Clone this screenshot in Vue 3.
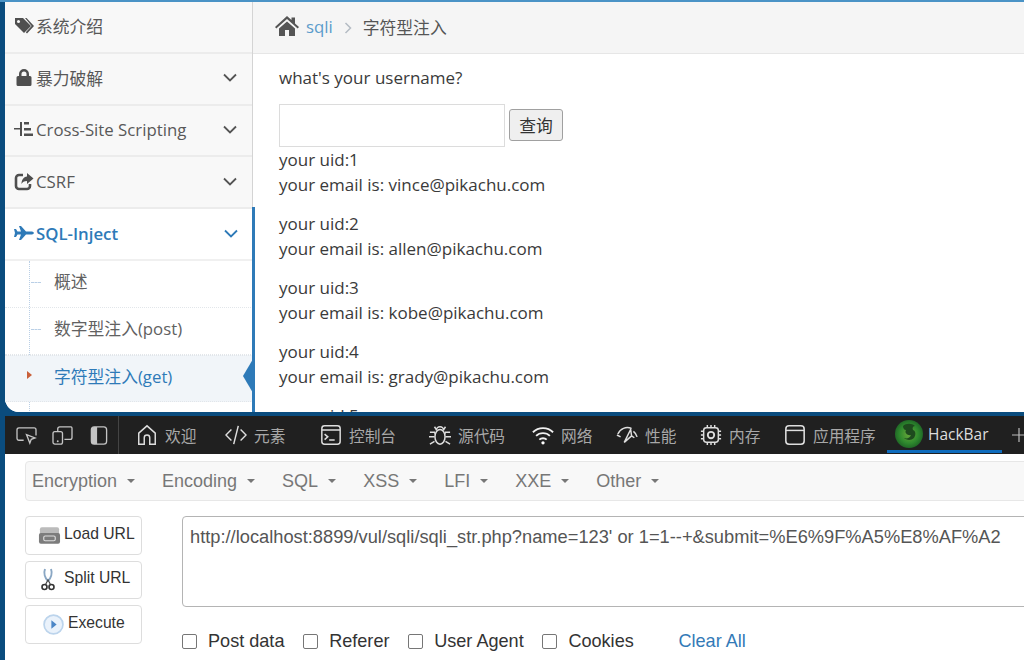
<script setup>
const navs = [
  { id: 'tag', label: '系统介绍', arrow: false },
  { id: 'lock', label: '暴力破解', arrow: true },
  { id: 'xss', label: 'Cross-Site Scripting', arrow: true },
  { id: 'share', label: 'CSRF', arrow: true },
]
const subs = [
  { label: '概述', active: false },
  { label: '数字型注入(post)', active: false },
  { label: '字符型注入(get)', active: true },
]
const results = [
  ['1', 'vince'], ['2', 'allen'], ['3', 'kobe'], ['4', 'grady'],
]
const tabs = [
  { id: 'home', label: '欢迎', w: 89 },
  { id: 'code', label: '元素', w: 95 },
  { id: 'console', label: '控制台', w: 109 },
  { id: 'bug', label: '源代码', w: 103 },
  { id: 'wifi', label: '网络', w: 84 },
  { id: 'perf', label: '性能', w: 84 },
  { id: 'chip', label: '内存', w: 84 },
  { id: 'app', label: '应用程序', w: 103 },
]
const menus = ['Encryption', 'Encoding', 'SQL', 'XSS', 'LFI', 'XXE', 'Other']
const checks = ['Post data', 'Referer', 'User Agent', 'Cookies']
</script>

<template>
  <div class="screen">
    <div class="page">
      <aside class="side">
        <div class="side-top">
          <div v-for="n in navs" :key="n.id" class="nav">
            <svg class="nav-icon" viewBox="0 0 20 20">
              <g v-if="n.id === 'tag'" fill="#4f4f4f">
                <path d="M1 2h8l8 8-7 7-9-9z" />
                <path d="M11 2h1.500l7.500 8-7 7.500-1.200-1.200 5.800-6.300z" />
                <circle cx="4.500" cy="5.500" r="1.500" fill="#f8f8f8" />
              </g>
              <path v-else-if="n.id === 'lock'" fill="#4f4f4f" fill-rule="evenodd" d="M5 8V6a5 5 0 0 1 10 0v2h1a1.500 1.500 0 0 1 1.500 1.500v7A1.500 1.500 0 0 1 16 18H4a1.500 1.500 0 0 1-1.500-1.500v-7A1.500 1.500 0 0 1 4 8zm2.500 0h5V6a2.500 2.500 0 0 0-5 0z" />
              <g v-else-if="n.id === 'xss'" fill="#4f4f4f">
                <rect x="0" y="9" width="6" height="1.500" />
                <rect x="6" y="3" width="2" height="14" />
                <rect x="10" y="3" width="5" height="2.500" />
                <rect x="10" y="9" width="7" height="2.500" />
                <rect x="10" y="14.500" width="9" height="2.500" />
              </g>
              <g v-else>
                <path fill="none" stroke="#4f4f4f" stroke-width="2.600" d="M9 4H5a3 3 0 0 0-3 3v8a3 3 0 0 0 3 3h8a3 3 0 0 0 3-3v-2" />
                <path fill="#4f4f4f" d="M13 2l6.500 5.500L13 13v-3c-3 0-4.500 1-5.500 3 0-4 2-7 5.500-7.500z" />
              </g>
            </svg>
            <span class="nav-label">{{ n.label }}</span>
            <svg v-if="n.arrow" class="chev" viewBox="0 0 14 9"><path d="M1 1.500l6 6 6-6" fill="none" stroke="#555" stroke-width="1.800" /></svg>
          </div>
        </div>
        <div class="side-active">
          <div class="nav nav-on">
            <svg class="nav-icon" viewBox="0 0 20 20"><path fill="#2e7ab8" d="M0 6l2 0 1.500 2.500H7L5 3h2l5 5.500h5c1.500 0 3 .7 3 1.500s-1.500 1.500-3 1.500h-5L7 17H5l2-5.500H3.500L2 14H0l1-4z" /></svg>
            <span class="nav-label">SQL-Inject</span>
            <svg class="chev" viewBox="0 0 14 9"><path d="M1 1.500l6 6 6-6" fill="none" stroke="#2e7ab8" stroke-width="1.800" /></svg>
          </div>
          <div class="subs">
            <i class="tree"></i>
            <div v-for="s in subs" :key="s.label" class="sub" :class="{ on: s.active }">
              <i v-if="!s.active" class="tick"></i>
              <i v-else class="mark"></i>
              <i v-if="s.active" class="pointer"></i>
              <span>{{ s.label }}</span>
            </div>
          </div>
        </div>
      </aside>
      <main class="main">
        <div class="crumbs">
          <svg class="house" viewBox="0 0 24 20"><path fill="#555" d="M12 0l4.500 4V1.500h3.500v6L24 11l-1.300 1.500L12 3 1.300 12.500 0 11zM4 12.500L12 5.500l8 7V20h-6v-6h-4v6H4z" /></svg>
          <span class="crumb-link">sqli</span>
          <svg class="crumb-sep" viewBox="0 0 8 12"><path d="M1.500 1l5 5-5 5" fill="none" stroke="#b5bcc4" stroke-width="1.500" /></svg>
          <span class="crumb-now">字符型注入</span>
        </div>
        <div class="content">
          <p class="ask">what's your username?</p>
          <div class="form">
            <input class="field" type="text" />
            <button class="query">查询</button>
          </div>
          <p v-for="r in results" :key="r[0]" class="row">your uid:{{ r[0] }}<br />your email is: {{ r[1] }}@pikachu.com</p>
          <p class="row">your uid:5</p>
        </div>
      </main>
    </div>

    <div class="devtools">
      <div class="dock-icons">
        <svg class="ti" viewBox="0 0 22 20"><path d="M8 15H3a2 2 0 0 1-2-2V4a2 2 0 0 1 2-2h16a2 2 0 0 1 2 2v6" fill="none" stroke="#c4c4c4" stroke-width="1.400" /><path d="M11 9l9 3.500-4 1.500-1.500 4z" fill="none" stroke="#c4c4c4" stroke-width="1.400" /></svg>
        <svg class="ti" viewBox="0 0 22 20"><path d="M6 6V3a2 2 0 0 1 2-2h12a1.500 1.500 0 0 1 1 1.500V12a2 2 0 0 1-2 2h-6" fill="none" stroke="#c4c4c4" stroke-width="1.400" /><rect x="1" y="6" width="10" height="13" rx="2" fill="#202020" stroke="#c4c4c4" stroke-width="1.400" /><circle cx="6" cy="16" r="1" fill="#c4c4c4" /></svg>
        <svg class="ti dock" viewBox="0 0 18 20"><rect x="1" y="1" width="16" height="18" rx="3" fill="none" stroke="#c4c4c4" stroke-width="1.400" /><path d="M1 4a3 3 0 0 1 3-3h3v18H4a3 3 0 0 1-3-3z" fill="#c4c4c4" /></svg>
      </div>
      <div v-for="t in tabs" :key="t.id" class="tab" :style="{ width: t.w + 'px' }">
        <svg class="tab-icon" viewBox="0 0 24 24" fill="none" stroke="#dedede" stroke-width="1.600">
          <path v-if="t.id === 'home'" d="M3 22V10l9-8 9 8v12h-6v-7a3 3 0 0 0-6 0v7z" />
          <g v-else-if="t.id === 'code'"><path d="M7 6l-6 6 6 6M17 6l6 6-6 6M14.500 2l-5 20" /></g>
          <g v-else-if="t.id === 'console'"><rect x="2" y="2" width="20" height="20" rx="3" /><path d="M2 6.500h20M5 11l3.500 3L5 17M10 17.500h6" /></g>
          <g v-else-if="t.id === 'bug'"><ellipse cx="12" cy="14" rx="5.500" ry="8" /><path d="M8 7a4 4 0 0 1 8 0M6 3l2.500 4M18 3l-2.500 4M1 9h5l1 2M23 9h-5l-1 2M0 14h6M24 14h-6M1 22l5-3M23 22l-5-3" /></g>
          <g v-else-if="t.id === 'wifi'"><path stroke="#f0f0f0" stroke-width="2" d="M1 9c6-6 16-6 22 0M4.500 13c4-4 11-4 15 0M8 17c2-2 6-2 8 0" /><circle cx="12" cy="20.500" r="1.800" fill="#fff" stroke="none" /></g>
          <g v-else-if="t.id === 'perf'"><path d="M1 12l4 2M2 11a11 11 0 0 1 15-6M19 8a11 11 0 0 1 4 6M20 15l-3-2M9 20l7-14 1 7z" /></g>
          <g v-else-if="t.id === 'chip'"><rect x="4" y="4" width="16" height="16" rx="3" /><circle cx="12" cy="12" r="3.500" stroke-width="2" /><path d="M8 1v3M12 1v3M16 1v3M8 20v3M12 20v3M16 20v3M1 8h3M1 12h3M1 16h3M20 8h3M20 12h3M20 16h3" /></g>
          <g v-else><rect x="2" y="2" width="20" height="20" rx="3.500" stroke-width="1.700" /><path d="M2 7h20" /></g>
        </svg>
        <span>{{ t.label }}</span>
      </div>
      <div class="tab hack">
        <svg class="fox" viewBox="0 0 28 28">
          <defs><radialGradient id="gl" cx="0.500" cy="0.500" r="0.550"><stop offset="0" stop-color="#6aa83a" /><stop offset="0.600" stop-color="#2f8a2e" /><stop offset="1" stop-color="#1c5f24" /></radialGradient></defs>
          <circle cx="14" cy="14" r="14" fill="url(#gl)" />
          <path d="M8 6c3-3 9-3 12 0-2 0-3 2-2 4 3 1 3 5 1 8-3 3-8 2-10 0 3 1 6 0 7-3-3 1-7-2-5-5-2 0-3-2-3-4z" fill="#1e4a1e" />
        </svg>
        <span>HackBar</span>
      </div>
      <svg class="plus" viewBox="0 0 14 14"><path d="M7 0v14M0 7h14" stroke="#bbb" stroke-width="1.200" /></svg>
    </div>

    <section class="hackbar">
      <nav class="menu">
        <span v-for="m in menus" :key="m" class="menu-item">{{ m }}<i class="caret"></i></span>
      </nav>
      <div class="work">
        <div class="btns">
          <button class="hb">
            <svg class="hb-icon" viewBox="0 0 24 20">
              <rect x="2" y="2" width="20" height="8" rx="2" fill="#bbb" />
              <rect x="1" y="8" width="22" height="11" rx="2" fill="#7c7c7c" />
              <rect x="6" y="11" width="12" height="5" rx="1.500" fill="none" stroke="#ddd" stroke-width="1.200" />
            </svg>
            Load URL
          </button>
          <button class="hb">
            <svg class="hb-icon sc" viewBox="0 0 14 24">
              <path d="M4 1c-1.500 4 0 9 3 12M10 1c1.500 4 0 9-3 12" fill="none" stroke="#8aa7c4" stroke-width="2" />
              <circle cx="3.500" cy="19" r="2.500" fill="none" stroke="#333" stroke-width="1.600" />
              <circle cx="10.500" cy="19" r="2.500" fill="none" stroke="#333" stroke-width="1.600" />
              <path d="M4.500 16.500L7 12l2.500 4.500" fill="none" stroke="#444" stroke-width="1.200" />
            </svg>
            Split URL
          </button>
          <button class="hb exec">
            <svg class="hb-icon ex" viewBox="0 0 20 20">
              <circle cx="10" cy="10" r="9" fill="#eaf2fb" stroke="#bcd4ec" stroke-width="1.600" />
              <path d="M8 6l5 4-5 4z" fill="#4c86c6" />
            </svg>
            Execute
          </button>
        </div>
        <div class="url-col">
          <div class="url">http://localhost:8899/vul/sqli/sqli_str.php?name=123' or 1=1--+&amp;submit=%E6%9F%A5%E8%AF%A2</div>
          <div class="checks">
            <label v-for="c in checks" :key="c" class="check"><i class="box"></i>{{ c }}</label>
            <span class="clear">Clear All</span>
          </div>
        </div>
      </div>
    </section>
  </div>
</template>

<style>
html, body { margin: 0; background: #fff; }
</style>

<style scoped>
.screen {
  width: 1024px;
  height: 660px;
  overflow: hidden;
  background: #0a4c7e;
  display: flex;
  flex-direction: column;
  padding-left: 5px;
  box-sizing: border-box;
  border-top: 2px solid #4a93c6;
  font-family: "Open Sans", "Noto Sans CJK SC", sans-serif;
}
.page {
  height: 410px;
  flex: none;
  display: flex;
  background: #fff;
  border-bottom-left-radius: 14px;
  overflow: hidden;
}
.side {
  width: 248px;
  flex: none;
  position: relative;
  z-index: 1;
  background: #fff;
}
.side-top { border-right: 1px solid #d4d4d4; }
.side-active {
  position: relative;
  height: 203px;
}
.side-active::after {
  content: "";
  position: absolute;
  top: -2px;
  bottom: 0;
  right: -2px;
  width: 3px;
  background: #2e7ab8;
}
.nav {
  height: 51.800px;
  box-sizing: border-box;
  display: flex;
  align-items: center;
  padding: 0 15px 2px 9px;
  background: #f8f8f8;
  border-bottom: 2px solid #ececec;
  font-size: 16.800px;
  color: #585858;
}
.nav-icon { width: 20px; height: 20px; flex: none; }
.nav-label { margin-left: 2px; flex: 1; white-space: nowrap; }
.chev { width: 14px; height: 9px; flex: none; }
.nav-on {
  background: #fff;
  color: #2e7ab8;
  font-weight: 600;
  border-bottom: 2px solid #f0f0f0;
}
.subs { position: relative; }
.tree {
  position: absolute;
  left: 24px;
  top: 0;
  height: 152px;
  border-left: 1px dotted #b9cfe6;
}
.sub {
  position: relative;
  height: 47px;
  box-sizing: border-box;
  border-bottom: 1px dotted #e2e6ea;
  display: flex;
  align-items: center;
  padding: 0 0 5px 49px;
  font-size: 16.800px;
  color: #616161;
  white-space: nowrap;
}
.sub.on { background: #f1f5f9; color: #2e7ab8; border-top: 1px dotted #e2e6ea; }
.tick {
  position: absolute;
  left: 26px;
  top: 21px;
  width: 10px;
  border-top: 1px dashed #b9cfe6;
}
.mark {
  position: absolute;
  left: 22px;
  top: 15px;
  border-left: 5px solid #c9603a;
  border-top: 4px solid transparent;
  border-bottom: 4px solid transparent;
}
.pointer {
  position: absolute;
  right: 0;
  top: 3px;
  border-right: 10px solid #2e7ab8;
  border-top: 17px solid transparent;
  border-bottom: 17px solid transparent;
}
.main { flex: 1; min-width: 0; }
.crumbs {
  height: 52px;
  box-sizing: border-box;
  background: #f5f5f5;
  border-bottom: 1px solid #e6e6e6;
  display: flex;
  align-items: center;
  padding: 0 0 2px 22px;
  font-size: 16.800px;
  color: #555;
}
.house { width: 24px; height: 20px; flex: none; margin-bottom: 2px; }
.crumb-link { color: #5a9bcb; margin-left: 7px; }
.crumb-sep { width: 8px; height: 12px; margin: 2px 11px 0 11px; }
.crumb-now { color: #555; }
.content { padding: 10px 26px; font-size: 17px; line-height: 25.600px; color: #3a3a3a; }
.ask { margin: 0 0 13px; padding-top: 1px; }
.form { display: flex; align-items: center; gap: 4px; height: 43px; }
.field {
  width: 226px;
  height: 43px;
  box-sizing: border-box;
  border: 1px solid #dcdcdc;
  background: #fff;
  outline: none;
}
.query {
  width: 54px;
  height: 32px;
  padding: 0;
  box-sizing: border-box;
  border: 1px solid #a0a0a0;
  border-radius: 3px;
  background: #efefef;
  font: 16.800px "Noto Sans CJK SC", sans-serif;
  color: #333;
}
.row { margin: 0 0 12.800px; white-space: nowrap; }
.devtools {
  margin-top: 4px;
  height: 38px;
  flex: none;
  background: #202020;
  display: flex;
  align-items: center;
  position: relative;
  font-size: 15.700px;
  color: #a8a8a8;
}
.dock-icons {
  width: 114px;
  height: 38px;
  flex: none;
  box-sizing: border-box;
  display: flex;
  align-items: center;
  padding-left: 11px;
  gap: 15px;
  border-right: 1px solid #444;
  margin-right: 17px;
}
.ti { width: 21px; height: 19px; flex: none; }
.dock { width: 18px; margin-left: 2px; }
.tab {
  display: flex;
  align-items: center;
  gap: 7px;
  height: 38px;
  flex: none;
  white-space: nowrap;
  font-family: "Noto Sans CJK SC", sans-serif;
}
.tab-icon { width: 22px; height: 22px; flex: none; }
.hack {
  width: 115px;
  height: 37px;
  align-self: flex-start;
  box-sizing: border-box;
  padding: 1px 0 0 8px;
  gap: 5px;
  color: #ddd;
  font-family: "Open Sans", sans-serif;
  font-size: 15.500px;
  border-bottom: 3px solid #0f6cbd;
}
.fox { width: 28px; height: 28px; flex: none; }
.plus { width: 14px; height: 14px; margin-left: 10px; flex: none; }
.hackbar {
  flex: 1;
  background: #fff;
  padding: 7px 0 0 20px;
  font-family: "Liberation Sans", Arial, sans-serif;
  min-height: 0;
}
.menu {
  height: 40px;
  box-sizing: border-box;
  margin-right: -4px;
  background: #f8f8f8;
  border: 1px solid #e7e7e7;
  border-radius: 4px;
  display: flex;
  align-items: center;
  padding-left: 6px;
  gap: 27px;
  font-size: 18px;
  color: #777;
}
.menu-item { display: flex; align-items: center; white-space: nowrap; }
.caret {
  margin-left: 10px;
  border-top: 4px solid #777;
  border-left: 4px solid transparent;
  border-right: 4px solid transparent;
}
.work { display: flex; gap: 40px; margin-top: 15px; }
.btns { width: 117px; flex: none; display: flex; flex-direction: column; gap: 6px; }
.hb {
  height: 38.500px;
  box-sizing: border-box;
  background: #fff;
  border: 1px solid #ddd;
  border-radius: 4px;
  display: flex;
  align-items: center;
  padding: 0 0 3px 12px;
  gap: 3px;
  font: 15.700px "Liberation Sans", Arial, sans-serif;
  color: #333;
}
.hb-icon { width: 23px; height: 20px; flex: none; margin-top: 3px; }
.sc { width: 14px; height: 24px; margin-left: 3px; margin-right: 6px; }
.ex { width: 21px; height: 21px; margin-left: 5px; margin-right: 1px; }
.url-col { flex: 1; min-width: 0; }
.url {
  height: 91px;
  box-sizing: border-box;
  margin-right: -4px;
  border: 1px solid #b4b4b4;
  border-radius: 4px;
  background: #fff;
  padding: 9px 7px;
  font-size: 18.270px;
  line-height: 22px;
  color: #555;
  white-space: nowrap;
  overflow: hidden;
}
.checks {
  display: flex;
  align-items: center;
  margin-top: 22px;
  font-size: 18.100px;
  color: #333;
  line-height: 24px;
}
.check { display: flex; align-items: center; margin-right: 18.700px; white-space: nowrap; }
.box {
  width: 15px;
  height: 15px;
  box-sizing: border-box;
  border: 1px solid #767676;
  border-radius: 2px;
  margin-right: 11px;
}
.clear { margin-left: 26px; color: #337ab7; }
</style>
